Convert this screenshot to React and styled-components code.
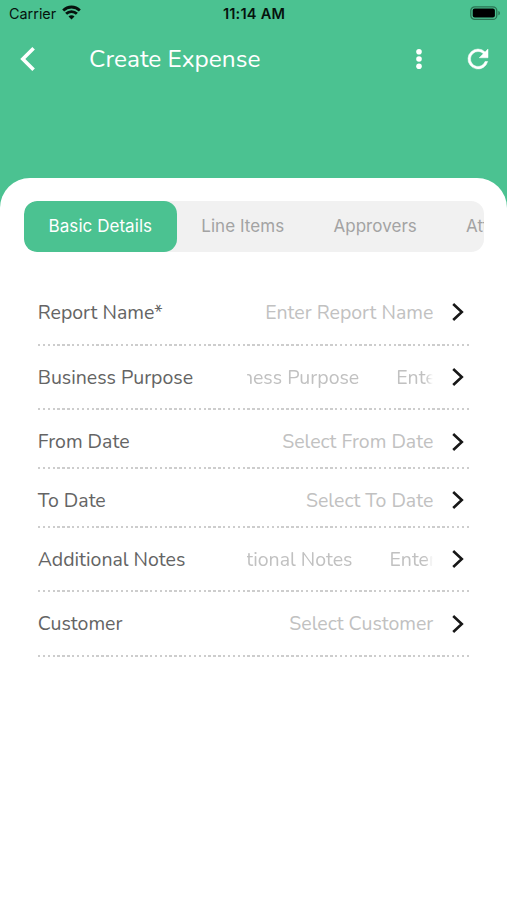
import React from 'react'
import styled, { createGlobalStyle } from 'styled-components'

const tabs = ['Basic Details', 'Line Items', 'Approvers', 'Attachments']

const fields = [
  { label: 'Report Name*', hint: 'Enter Report Name', tall: true },
  { label: 'Business Purpose', hint: 'Enter Business Purpose', tall: true, scroll: 95 },
  { label: 'From Date', hint: 'Select From Date' },
  { label: 'To Date', hint: 'Select To Date' },
  { label: 'Additional Notes', hint: 'Enter Additional Notes', tall: true, scroll: 94 },
  { label: 'Customer', hint: 'Select Customer', tall: true },
]

const App = () => {
  return (
    <Screen>
      <GlobalStyle />
      <StatusBar>
        <Carrier>
          Carrier
          <svg width="19" height="15" viewBox="0 0 19 15" fill="none" stroke="#06120d" strokeWidth="2.8">
            <path d="M1.2 5.4a11.8 11.8 0 0 1 16.6 0" />
            <path d="M4.1 8.8a7.6 7.6 0 0 1 10.8 0" />
            <path d="M9.5 14.6 6.5 11.6a4.2 4.2 0 0 1 6 0z" fill="#06120d" stroke="none" />
          </svg>
        </Carrier>
        <Clock>11:14 AM</Clock>
        <Battery>
          <svg width="31" height="15" viewBox="0 0 31 15">
            <rect x="0.8" y="0.8" width="26" height="12.6" rx="4" fill="none" stroke="#2a7453" strokeWidth="1.3" />
            <rect x="2.7" y="2.6" width="22.2" height="9" rx="2" fill="#000" />
            <path d="M28.4 4.9c2 .6 2 3.8 0 4.4z" fill="#2a7453" />
          </svg>
        </Battery>
      </StatusBar>

      <Header>
        <IconButton aria-label="Back">
          <svg width="18" height="26" viewBox="0 0 18 26" fill="none" stroke="#fff" strokeWidth="3.6">
            <path d="M14.6 2.2 3.8 13l10.8 10.8" />
          </svg>
        </IconButton>
        <Title>Create Expense</Title>
        <IconButton aria-label="More">
          <svg width="6" height="22" viewBox="0 0 6 22" fill="#fff">
            <circle cx="3" cy="3.7" r="2.8" />
            <circle cx="3" cy="11" r="2.8" />
            <circle cx="3" cy="18.3" r="2.8" />
          </svg>
        </IconButton>
        <IconButton aria-label="Refresh">
          <svg width="30" height="30" viewBox="0 0 24 24" fill="#fff" stroke="#fff" strokeWidth="0.4">
            <path d="M17.65 6.35A7.96 7.96 0 0 0 12 4a8 8 0 1 0 7.73 10h-2.08A6 6 0 1 1 12 6c1.66 0 3.14.69 4.22 1.78L13 11h7V4z" />
          </svg>
        </IconButton>
      </Header>

      <Sheet>
        <Tabs>
          {tabs.map((tab, i) => (
            <Tab key={tab} $active={i === 0}>{tab}</Tab>
          ))}
        </Tabs>

        <Form>
          {fields.map((field) => (
            <Row key={field.label} $tall={field.tall}>
              <Label>{field.label}</Label>
              {field.scroll ? (
                <Marquee>
                  <Track $scroll={field.scroll}>
                    <span>{field.hint}</span>
                    <span>{field.hint}</span>
                  </Track>
                </Marquee>
              ) : (
                <Hint>{field.hint}</Hint>
              )}
              <Chevron width="14" height="20" viewBox="0 0 14 20">
                <path d="M2.2 2 10.8 10l-8.6 8" />
              </Chevron>
            </Row>
          ))}
        </Form>
      </Sheet>
    </Screen>
  )
}

export default App

const GlobalStyle = createGlobalStyle`
  body {
    margin: 0;
    background: #fff;
  }

  * {
    box-sizing: border-box;
  }
`

const Screen = styled.div`
  height: 900px;
  display: flex;
  flex-direction: column;
  overflow: hidden;
  background: #4bc291;
  font-family: Nunito, Lato, sans-serif;
`

const StatusBar = styled.div`
  height: 28px;
  padding: 0 6px 1px 9px;
  display: grid;
  grid-template-columns: 1fr auto 1fr;
  align-items: center;
  color: #06120d;
  font-family: Inter, sans-serif;
  font-size: 14.4px;
`

const Carrier = styled.div`
  display: flex;
  align-items: center;
  gap: 6px;

  svg {
    margin-top: -3px;
  }
`

const Clock = styled.div`
  margin: 1px 2px 0 0;
  font-size: 14.6px;
  font-weight: 600;
  letter-spacing: 0.2px;
`

const Battery = styled.div`
  display: flex;
  justify-content: flex-end;
`

const Header = styled.header`
  height: 150px;
  padding: 16px 14px 0 19px;
  display: flex;
  align-items: flex-start;
`

const IconButton = styled.button`
  height: 30px;
  padding: 0;
  border: none;
  background: none;
  display: flex;
  align-items: center;

  & + & {
    margin-left: 41px;
  }
`

const Title = styled.h1`
  flex: 1;
  margin: 0 0 0 52px;
  color: #fff;
  font-size: 24.4px;
  font-weight: 400;
  line-height: 30px;
`

const Sheet = styled.main`
  flex: 1;
  padding: 23px 23px 0 24px;
  border-radius: 30px 30px 0 0;
  background: #fff;
`

const Tabs = styled.nav`
  height: 51px;
  display: flex;
  overflow: hidden;
  border-radius: 13px;
  background: #f1f1f1;
`

const Tab = styled.div`
  flex: none;
  padding: 0 24.6px;
  border-radius: 13px;
  background: ${({ $active }) => ($active ? '#4bc291' : 'transparent')};
  color: ${({ $active }) => ($active ? '#fff' : '#a3a3a3')};
  font-family: Inter, sans-serif;
  font-size: 17px;
  letter-spacing: 0.05px;
  line-height: 50px;
`

const Form = styled.div`
  padding: 29px 13px 0 14px;
`

const Row = styled.div`
  height: ${({ $tall }) => ($tall ? '64.6px' : '58.8px')};
  padding-top: 17px;
  display: flex;
  align-items: flex-start;
  font-size: 19.5px;
  line-height: 30px;
  background: repeating-linear-gradient(90deg, #cdcdcd 0 2.4px, transparent 2.4px 4.87px) left bottom / 100% 2px no-repeat;
`

const Label = styled.div`
  flex: 1;
  margin-left: -0.3px;
  color: #646464;
`

const Hint = styled.div`
  color: #c1c1c1;
`

const Marquee = styled.div`
  width: 186px;
  overflow: hidden;
  color: #c1c1c1;
  mask-image: linear-gradient(90deg, #000 96%, transparent);
`

const Track = styled.div`
  display: flex;
  gap: 37px;
  width: max-content;
  white-space: nowrap;
  transform: translateX(-${({ $scroll }) => $scroll}px);
`

const Chevron = styled.svg`
  margin: 4.4px 6px 0 17.7px;
  fill: none;
  stroke: #171717;
  stroke-width: 2.6;
`
